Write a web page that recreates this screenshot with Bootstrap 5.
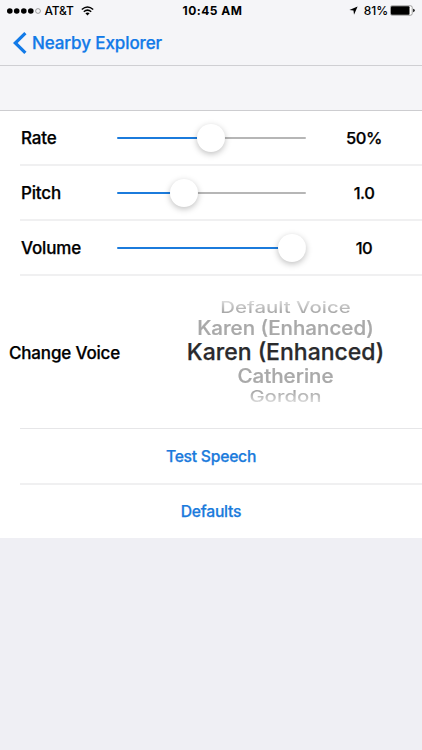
<!DOCTYPE html>
<html lang="en">
<head>
<meta charset="utf-8">
<meta name="viewport" content="width=device-width, initial-scale=1">
<title>Nearby Explorer</title>
<link href="https://cdn.jsdelivr.net/npm/bootstrap@5.3.0/dist/css/bootstrap.min.css" rel="stylesheet">
<style>
body{font-family:Inter,"Liberation Sans",sans-serif;font-size:17px;font-weight:500;line-height:22px;letter-spacing:-.17px;color:#000;background:#efeff4;height:750px;overflow:hidden}
.top-area{background:#f5f5f8}
.status-bar{height:21px;font-size:12px;line-height:21px;padding-left:7px;padding-right:7px}
.status-side{width:150px}
.signal{width:35px;height:8px}
.carrier{letter-spacing:-.2px;margin-left:2.5px}
.wifi{margin-left:7px}
.clock{font-weight:700;letter-spacing:.5px;padding-left:3px}
.pct{margin:0 2px 0 6px;letter-spacing:-.1px}
.title-bar{height:45px;border-bottom:1px solid #cfcfd3}
.back-link{color:#127ae8;padding-left:13px;letter-spacing:-.1px}
.back-text{margin-left:5px}
.section-gap{height:45px;border-bottom:1px solid #cdcdd0}
.back-text,.line-name,.line-value,.voice-name,.wheel,.act{-webkit-text-stroke:.25px currentColor}
.line-row{height:55px}
.line-row::after,.voice-row::after{content:"";display:block;height:2px;margin-top:-1px;background:#f0f0f1;margin-left:20px}
.voice-row::after{height:1px;margin-top:0;background:#e6e6e8}
.line-row.act-row::after{margin-top:0}
.line-row.last-row{height:54px}
.line-row.last-row::after{display:none}
.line-body{height:54px}
.line-name{width:117px;padding-left:21px}
.line-value{width:116px;padding-left:1px;font-size:16.5px;letter-spacing:-.45px}
.tune{width:189px;height:28px;display:block;margin-left:-.5px}
.tune::-webkit-slider-runnable-track{height:2px;border-radius:1px;background:linear-gradient(90deg,#1b7bdc var(--fill),#b6b6b6 var(--fill))}
.tune::-webkit-slider-thumb{width:28px;height:28px;margin-top:-13.5px;background:#fff;box-shadow:0 2px 6px rgba(0,0,0,.25)}
.voice-row{height:153px}
.voice-body{height:152px}
.voice-name{padding:1px 0 0 9px;width:149px}
.wheel{width:273px;height:110px;letter-spacing:0}
.wheel div{white-space:nowrap}
.wheel span{display:inline-block}
.w-far{height:17px;line-height:17px;font-size:20.4px;-webkit-text-stroke:0}
.w-far span{transform:scaleY(.76);background:linear-gradient(#d9d9d9,#a2a2a2);-webkit-background-clip:text;background-clip:text;color:transparent}
.w-far.low span{background:linear-gradient(#a2a2a2,#dcdcdc);-webkit-background-clip:text;background-clip:text}
.w-near{height:24px;line-height:24px;font-size:20.6px;color:#a9a9a9}
.w-near span{transform:scaleY(.95)}
.w-pick{height:24px;line-height:24px;font-size:23px;color:#2a2a2c}
.act{color:#1b7bdc;font-size:15.7px;letter-spacing:-.25px;text-decoration:none;padding-top:2px}
</style>
</head>
<body>
<header class="top-area">
  <div class="status-bar d-flex justify-content-between align-items-center">
    <div class="status-side d-flex align-items-center">
      <svg class="signal" viewBox="0 0 35 8"><g fill="#000"><circle cx="2.8" cy="4" r="2.8"/><circle cx="9.7" cy="4" r="2.8"/><circle cx="16.8" cy="4" r="2.8"/><circle cx="23.8" cy="4" r="2.8"/></g><circle cx="31" cy="4" r="2.4" fill="none" stroke="#777" stroke-width=".7"/></svg>
      <span class="carrier">AT&amp;T</span>
      <svg class="wifi" width="13" height="10" viewBox="0 0 13 10" fill="none" stroke="#000" stroke-width="1.5"><path d="M.8 3.5Q6.5-1.5 12.2 3.5M2.8 5.7Q6.5 2.5 10.2 5.7"/><path d="M6.5 9.4 4.4 7.3Q6.5 5.6 8.6 7.3Z" fill="#000" stroke="none"/></svg>
    </div>
    <div class="clock">10:45 AM</div>
    <div class="status-side d-flex align-items-center justify-content-end">
      <svg width="9" height="9" viewBox="0 0 9 9"><path d="M8.6.4 5 8.7 4.5 4.6.4 4.1Z"/></svg>
      <span class="pct">81%</span>
      <svg class="batt" width="25" height="11" viewBox="0 0 25 11"><rect x=".5" y=".8" width="21.7" height="9.4" rx="1.6" fill="#fff" stroke="#777" stroke-width=".7"/><rect x="1" y="1.2" width="18.5" height="8.6" rx="1"/><path d="M23.2 3.8q1.5.3 1.5 1.7t-1.5 1.7Z"/></svg>
    </div>
  </div>
  <nav class="title-bar d-flex align-items-center">
    <a class="back-link d-flex align-items-center text-decoration-none" href="#">
      <svg width="14" height="22" viewBox="0 0 14 22" fill="none" stroke="#127ae8" stroke-width="3.2"><path d="M12.4 1.2 2.3 11 12.4 20.8"/></svg>
      <span class="back-text">Nearby Explorer</span>
    </a>
  </nav>
  <div class="section-gap"></div>
</header>
<main class="bg-white">
  <div class="line-row"><div class="line-body d-flex align-items-center">
    <label class="line-name" for="rate">Rate</label>
    <input id="rate" type="range" class="form-range tune" min="0" max="100" value="50" style="--fill:50%">
    <div class="line-value text-center">50%</div>
  </div></div>
  <div class="line-row"><div class="line-body d-flex align-items-center">
    <label class="line-name" for="pitch">Pitch</label>
    <input id="pitch" type="range" class="form-range tune" min="0" max="100" value="33" style="--fill:35%">
    <div class="line-value text-center">1.0</div>
  </div></div>
  <div class="line-row"><div class="line-body d-flex align-items-center">
    <label class="line-name" for="volume">Volume</label>
    <input id="volume" type="range" class="form-range tune" min="0" max="100" value="100" style="--fill:93%">
    <div class="line-value text-center">10</div>
  </div></div>
  <div class="voice-row"><div class="voice-body d-flex align-items-center">
    <div class="voice-name text-nowrap">Change Voice</div>
    <div class="wheel d-flex flex-column justify-content-center text-center">
      <div class="w-far"><span>Default Voice</span></div>
      <div class="w-near"><span>Karen (Enhanced)</span></div>
      <div class="w-pick"><span>Karen (Enhanced)</span></div>
      <div class="w-near"><span>Catherine</span></div>
      <div class="w-far low"><span>Gordon</span></div>
    </div>
  </div></div>
  <div class="line-row act-row"><div class="line-body d-flex align-items-center justify-content-center"><a class="act" href="#">Test Speech</a></div></div>
  <div class="line-row last-row"><div class="line-body d-flex align-items-center justify-content-center"><a class="act" href="#">Defaults</a></div></div>
</main>
<script src="https://cdn.jsdelivr.net/npm/bootstrap@5.3.0/dist/js/bootstrap.bundle.min.js"></script>
</body>
</html>
